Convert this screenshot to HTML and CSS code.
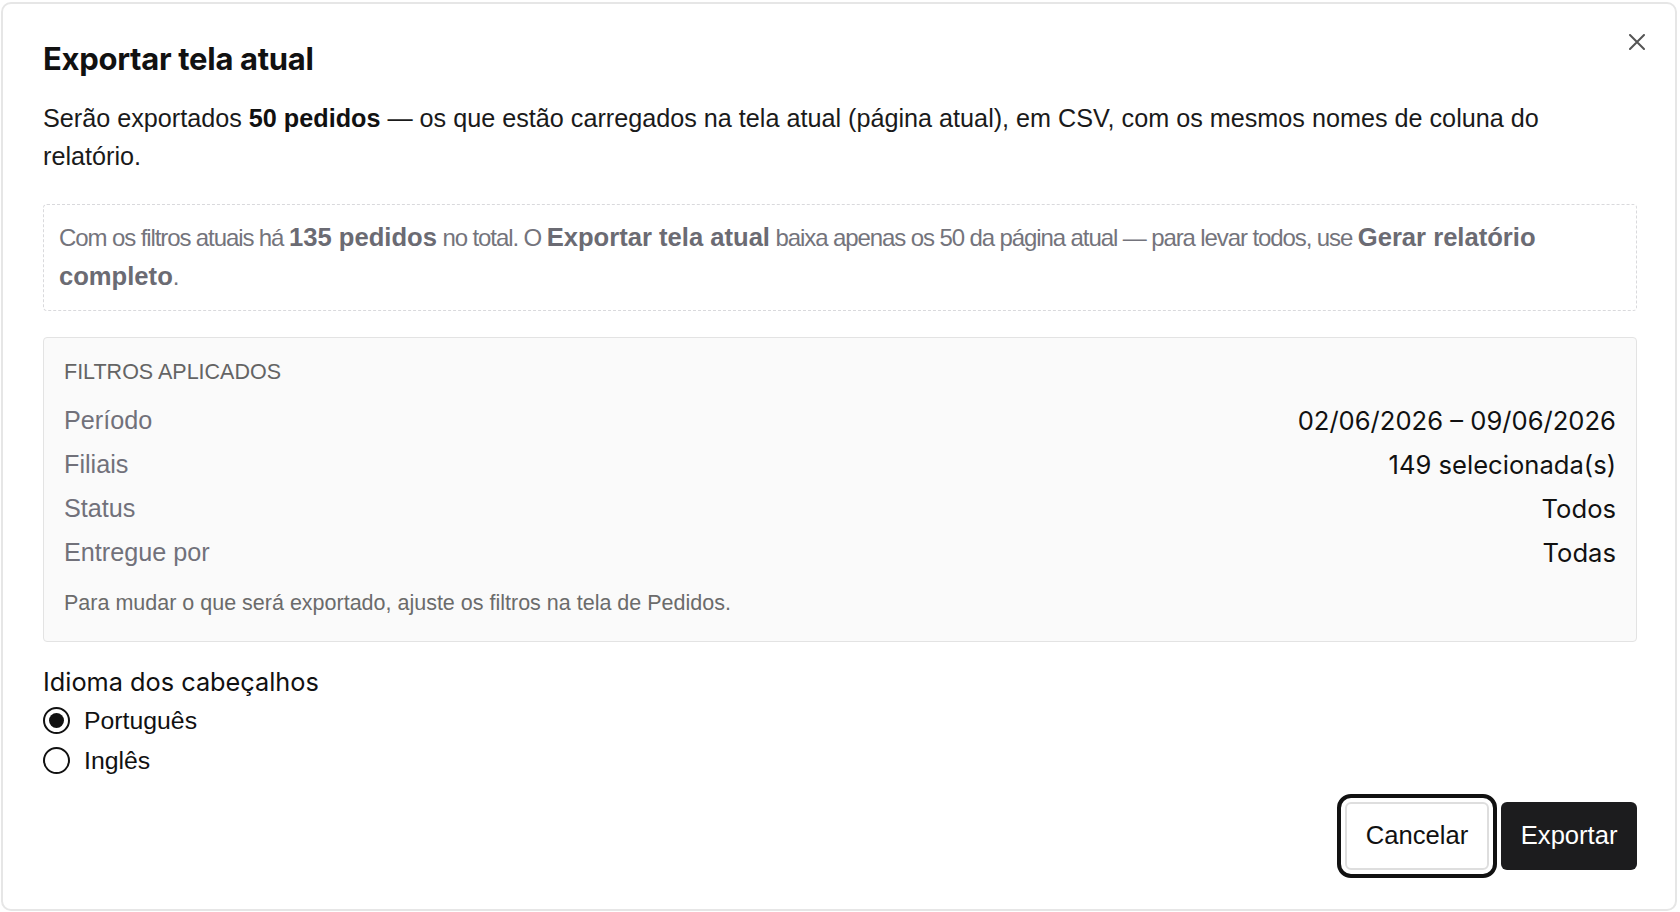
FILE: index.html
```html
<!DOCTYPE html>
<html lang="pt-BR">
<head>
  <meta charset="UTF-8" />
  <meta name="viewport" content="width=device-width, initial-scale=1.0" />
  <title>Exportar tela atual</title>
  <link rel="stylesheet" href="styles.css">
</head>
<body>
  <div class="dialog" role="dialog" aria-labelledby="dlg-title">
    <button class="close" aria-label="Fechar">
      <svg width="16" height="16" viewBox="0 0 16 16" fill="none" stroke="currentColor" stroke-width="2" stroke-linecap="round">
        <path d="M1 1 L15 15 M15 1 L1 15" />
      </svg>
    </button>

    <h2 class="title" id="dlg-title">Exportar tela atual</h2>
    <p class="lead">Serão exportados <strong>50 pedidos</strong> — os que estão carregados na tela atual (página atual), em CSV, com os mesmos nomes de coluna do relatório.</p>

    <div class="notice">
      Com os filtros atuais há <strong>135 pedidos</strong> no total. O <strong>Exportar tela atual</strong> baixa apenas os 50 da página atual — para levar todos, use <strong>Gerar relatório completo</strong>.
    </div>

    <section class="filters">
      <h3 class="filters-title">FILTROS APLICADOS</h3>
      <div class="filter-row">
        <span class="filter-label">Período</span>
        <span class="filter-value">02/06/2026 – 09/06/2026</span>
      </div>
      <div class="filter-row">
        <span class="filter-label">Filiais</span>
        <span class="filter-value">149 selecionada(s)</span>
      </div>
      <div class="filter-row">
        <span class="filter-label">Status</span>
        <span class="filter-value">Todos</span>
      </div>
      <div class="filter-row">
        <span class="filter-label">Entregue por</span>
        <span class="filter-value">Todas</span>
      </div>
      <p class="filters-note">Para mudar o que será exportado, ajuste os filtros na tela de Pedidos.</p>
    </section>

    <fieldset class="lang">
      <legend class="lang-title">Idioma dos cabeçalhos</legend>
      <label class="radio">
        <input type="radio" name="lang" value="pt" checked>
        <span>Português</span>
      </label>
      <label class="radio">
        <input type="radio" name="lang" value="en">
        <span>Inglês</span>
      </label>
    </fieldset>

    <div class="actions">
      <button class="btn btn-secondary is-focused">Cancelar</button>
      <button class="btn btn-primary">Exportar</button>
    </div>
  </div>
</body>
</html>
```

FILE: styles.css
```css
html, body {
  margin: 0;
  padding: 0;
  background: #fff;
}
body {
  font-family: "Liberation Sans", Arial, sans-serif;
  color: #1a1a1a;
  padding: 2px 3px 0 1px;
}
.dialog {
  position: relative;
  height: 909px;
  box-sizing: border-box;
  border: 2px solid #e6e6e6;
  border-radius: 10px;
  padding: 36px 38px 0 40px;
  background: #fff;
}
.close {
  position: absolute;
  top: 22px;
  right: 22px;
  width: 32px;
  height: 32px;
  display: flex;
  align-items: center;
  justify-content: center;
  border: 0;
  background: none;
  color: #555;
  padding: 0;
  cursor: pointer;
}
.title {
  margin: 0;
  font-family: Inter, "Liberation Sans", sans-serif;
  font-weight: 700;
  font-size: 31px;
  line-height: 38px;
  letter-spacing: -0.3px;
  color: #111;
}
.lead {
  margin: 21px 0 0;
  max-width: 1540px;
  font-size: 25.2px;
  line-height: 38.4px;
  color: #1a1a1a;
}
.lead strong {
  font-weight: 700;
  color: #111;
}
.notice {
  margin-top: 28px;
  border: 1.6px dashed #d9d9dc;
  border-radius: 4px;
  padding: 13px 15px;
  font-size: 24px;
  letter-spacing: -1.1px;
  line-height: 38.4px;
  color: #74747c;
}
.notice strong {
  font-size: 25.6px;
  letter-spacing: 0;
  font-weight: 700;
  color: #6b6b73;
}
.filters {
  margin-top: 26px;
  background: #fafafa;
  border: 1.6px solid #e3e3e3;
  border-radius: 4px;
  padding: 19px 20px 22px;
}
.filters-title {
  margin: 0 0 11px;
  font-size: 21.5px;
  font-weight: 400;
  line-height: 31px;
  color: #646464;
}
.filter-row {
  display: flex;
  justify-content: space-between;
  align-items: center;
  height: 44px;
  font-size: 25.2px;
}
.filter-label {
  color: #71717a;
}
.filter-value {
  font-family: Inter, "Liberation Sans", sans-serif;
  color: #111;
  font-size: 25.6px;
}
.filters-note {
  margin: 13px 0 0;
  font-size: 21.5px;
  line-height: 31px;
  color: #6b6b6b;
}
.lang {
  margin: 21px 0 0;
  padding: 0;
  border: 0;
}
.lang-title {
  padding: 0;
  font-family: Inter, "Liberation Sans", sans-serif;
  font-size: 25.3px;
  line-height: 38px;
  color: #111;
}
.radio {
  display: flex;
  align-items: center;
  gap: 14px;
  height: 40px;
  font-size: 24.8px;
  color: #111;
}
.radio input {
  appearance: none;
  -webkit-appearance: none;
  margin: 0;
  width: 27px;
  height: 27px;
  box-sizing: border-box;
  border: 2.4px solid #111;
  border-radius: 50%;
  display: grid;
  place-content: center;
}
.radio input:checked::before {
  content: "";
  width: 15px;
  height: 15px;
  border-radius: 50%;
  background: #111;
}
.actions {
  display: flex;
  justify-content: flex-end;
  gap: 12px;
  margin-top: 21px;
}
.btn {
  font-family: "Liberation Sans", Arial, sans-serif;
  font-size: 25.6px;
  height: 68px;
  box-sizing: border-box;
  padding: 0 19px;
  border-radius: 6px;
  border: 0;
  cursor: pointer;
}
.btn-secondary {
  background: #fff;
  color: #111;
  border: 2px solid #dedede;
}
.btn-secondary.is-focused {
  outline: 4px solid #111;
  outline-offset: 4px;
}
.btn-primary {
  background: #1c1c1e;
  color: #fff;
  padding: 0 19.5px;
}
```
